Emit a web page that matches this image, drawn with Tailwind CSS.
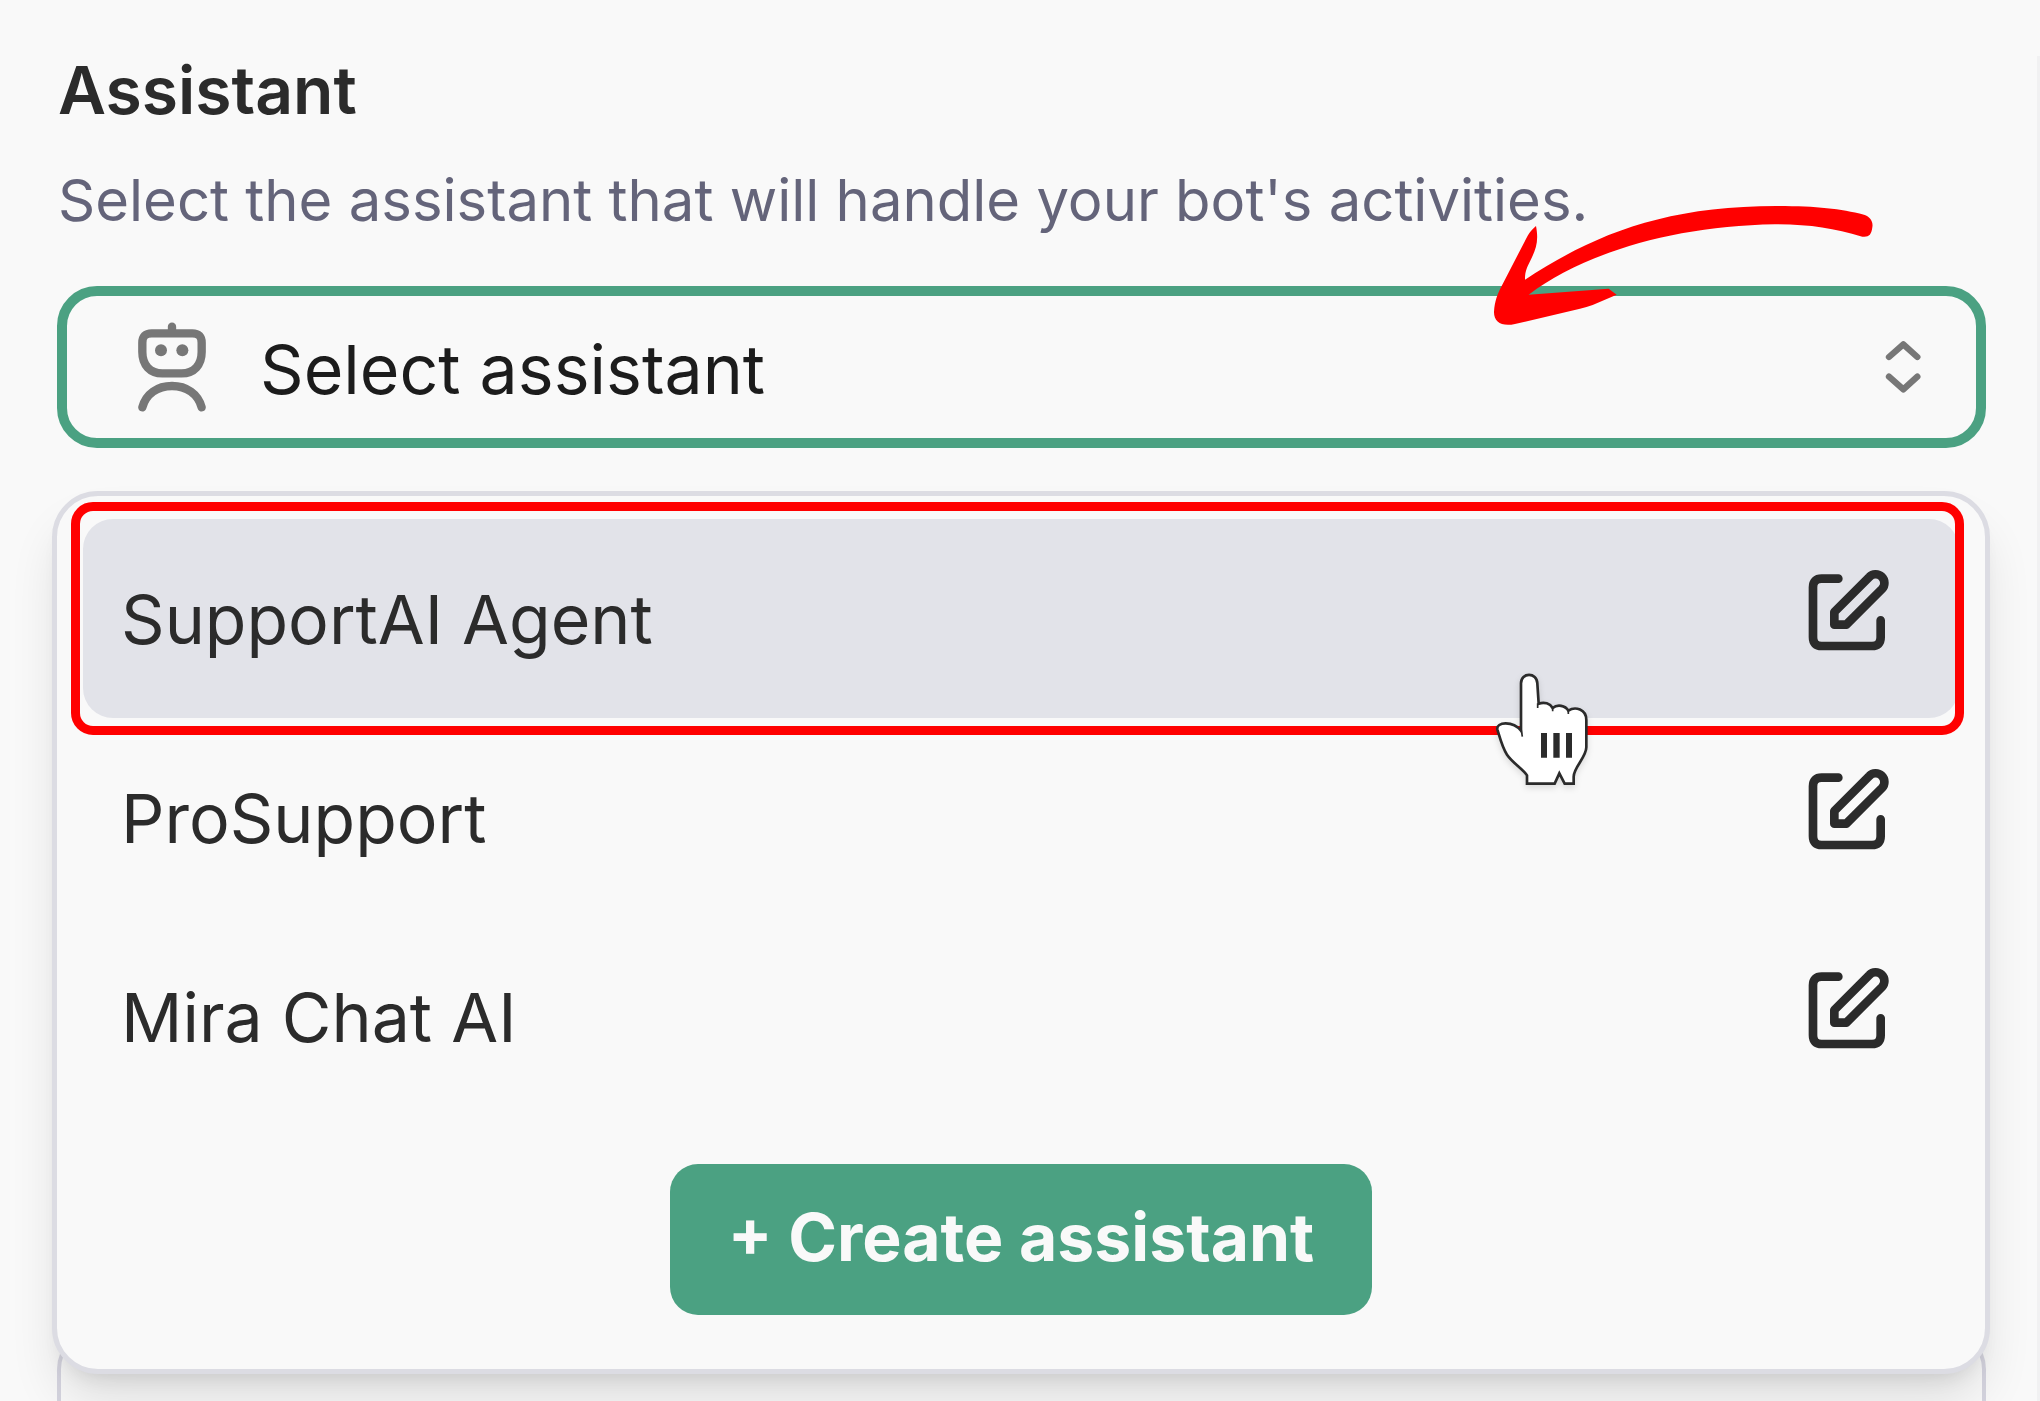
<!DOCTYPE html>
<html lang="en">
<head>
    <meta charset="UTF-8">
    <meta name="viewport" content="width=device-width, initial-scale=1.0">
    <title>Assistant</title>
    <script src="https://cdn.jsdelivr.net/npm/@tailwindcss/browser@4"></script>
</head>
<body class="flex h-screen flex-col overflow-hidden bg-[#f9f9f9] pt-14 font-['Inter',sans-serif] text-[#2b2b2b]">

    <!-- Edit icon, shared by the list rows -->
    <svg class="hidden">
        <symbol id="icon-edit" viewBox="78 891 255 255">
            <g fill="none" stroke="currentColor" stroke-width="26" stroke-linecap="round" stroke-linejoin="round">
                <path d="M175 926H125Q99 926 99 952V1102Q99 1128 125 1128H276Q302 1128 302 1102V1051"/>
                <path d="M163 1064V1026L268 921A26 26 0 0 1 306 957L199 1064Z"/>
            </g>
        </symbol>
    </svg>

    <main class="flex min-h-0 flex-1 flex-col border-r-3 border-[#f1f1f2] pr-[51px] pl-[57px]">
        <label for="assistant" class="pl-px text-[66px] leading-[68px] font-semibold">Assistant</label>
        <p id="assistant-hint" class="mt-9 pl-px text-[58px] leading-20 whitespace-nowrap text-[#64647a]">Select the assistant that will handle your bot's activities.</p>

        <div class="relative mt-[46px] flex h-[162px] shrink-0 items-center rounded-[40px] border-10 border-[#4ba182] pr-13 pl-17">
            <!-- Bot -->
            <svg class="h-[95px] w-[75px] shrink-0 text-[#777]" viewBox="285 150 225 285" fill="none" stroke="currentColor" stroke-width="25" stroke-linecap="round" stroke-linejoin="round" aria-hidden="true">
                <path d="M396 170V188"/>
                <path d="M335 190H457Q485 190 485 218V246C485 285 462 310 425 310H367C330 310 307 285 307 246V218Q307 190 335 190Z"/>
                <circle cx="363" cy="241" r="18" fill="currentColor" stroke="none"/>
                <circle cx="427" cy="241" r="18" fill="currentColor" stroke="none"/>
                <path d="M307 412C318 372 352 348 396 348S474 372 485 412"/>
            </svg>
            <select id="assistant" aria-describedby="assistant-hint" class="ml-[50px] h-full min-w-0 flex-1 appearance-none bg-transparent pt-1 text-[68px] text-[#1c1c1c] outline-none">
                <option>Select assistant</option>
            </select>
            <svg class="h-[58px] w-10 shrink-0 text-[#777]" viewBox="311 207 120 174" fill="none" stroke="currentColor" stroke-width="19" stroke-linecap="round" stroke-linejoin="round" aria-hidden="true">
                <path d="M326 264L369 226L411 264M326 323L369 361L411 323"/>
            </svg>
            <!-- Red arrow -->
            <svg class="pointer-events-none absolute -top-[106px] right-[76px] h-[150px] w-[440px]" viewBox="0 0 1320 450" aria-hidden="true">
                <path fill="#f00" d="M228 108C238 160 225 183 208 218C197 240 195 250 195 269C400 135 610 48 950 48C1070 48 1140 56 1212 74C1232 80 1240 96 1237 112C1234 136 1226 142 1207 140C1120 115 1050 103 945 103C640 108 370 190 206 314L446 296L470 314L398 345Q380 351 360 356L165 402C125 411 101 396 102 365C104 335 112 312 125 288L203 137Q210 124 228 108Z"/>
            </svg>
        </div>

        <div class="relative z-10 -mr-1 -ml-[5px] mt-[43px] flex shrink-0 flex-col items-center rounded-[46px] border-5 border-[#dcdce3] bg-[#f9f9f9] px-[26px] pt-[23px] pb-[54px] shadow-[0_32px_50px_-6px_rgba(0,0,0,0.11),0_14px_22px_-14px_rgba(0,0,0,0.14)]">
            <ul class="w-full">
                <li class="relative flex h-[199px] items-start rounded-[30px] bg-[#e2e3e9] pr-[68px]">
                    <button type="button" class="h-full flex-1 pl-[38px] text-left text-[68px]">SupportAI Agent</button>
                    <button type="button" aria-label="Edit SupportAI Agent" class="mt-12"><svg class="size-[85px]"><use href="#icon-edit"/></svg></button>
                    <span class="pointer-events-none absolute -inset-y-[17px] -right-[5px] -left-3 rounded-[22px] border-9 border-[#f00]"></span>
                    <!-- Pointer -->
                    <svg class="pointer-events-none absolute top-[131px] right-[339px] z-10 size-40 drop-shadow-md" viewBox="0 0 480 480" aria-hidden="true">
                        <path fill="#fff" stroke="#2b2b2b" stroke-width="8" d="M183 242V100C183 66 231 66 232 100L236 161C253 155 270 160 278 174C292 162 316 166 325 182C346 168 379 178 379 210V292C379 322 341 352 341 380V401H314L298 370L284 401H201V376C190 358 157 338 141 314C126 291 119 260 112 238C108 216 158 211 183 242Z"/>
                        <path fill="none" stroke="#2b2b2b" stroke-width="5" d="M233 160V174M278 172V184M325 180V192M183 236L187 260"/>
                        <path fill="#2b2b2b" d="M243 249H261V323H243ZM280 249H299V323H280ZM318 249H336V323H318Z"/>
                    </svg>
                </li>
                <li class="flex h-[199px] items-start pr-[68px]">
                    <button type="button" class="h-full flex-1 pl-[38px] text-left text-[68px]">ProSupport</button>
                    <button type="button" aria-label="Edit ProSupport" class="mt-12"><svg class="size-[85px]"><use href="#icon-edit"/></svg></button>
                </li>
                <li class="flex h-[199px] items-start pr-[68px]">
                    <button type="button" class="h-full flex-1 pl-[38px] text-left text-[68px]">Mira Chat AI</button>
                    <button type="button" aria-label="Edit Mira Chat AI" class="mt-12"><svg class="size-[85px]"><use href="#icon-edit"/></svg></button>
                </li>
            </ul>
            <button type="button" class="mt-12 h-[151px] rounded-[28px] bg-[#4ba182] px-[58px] pb-1 text-[66px] font-bold text-[#f9f9f9]">+ Create assistant</button>
        </div>

        <!-- Next field, partly covered by the list -->
        <div class="-mt-[45px] flex-1 rounded-t-[40px] border-4 border-b-0 border-[#d6d5e0]"></div>
    </main>

</body>
</html>
